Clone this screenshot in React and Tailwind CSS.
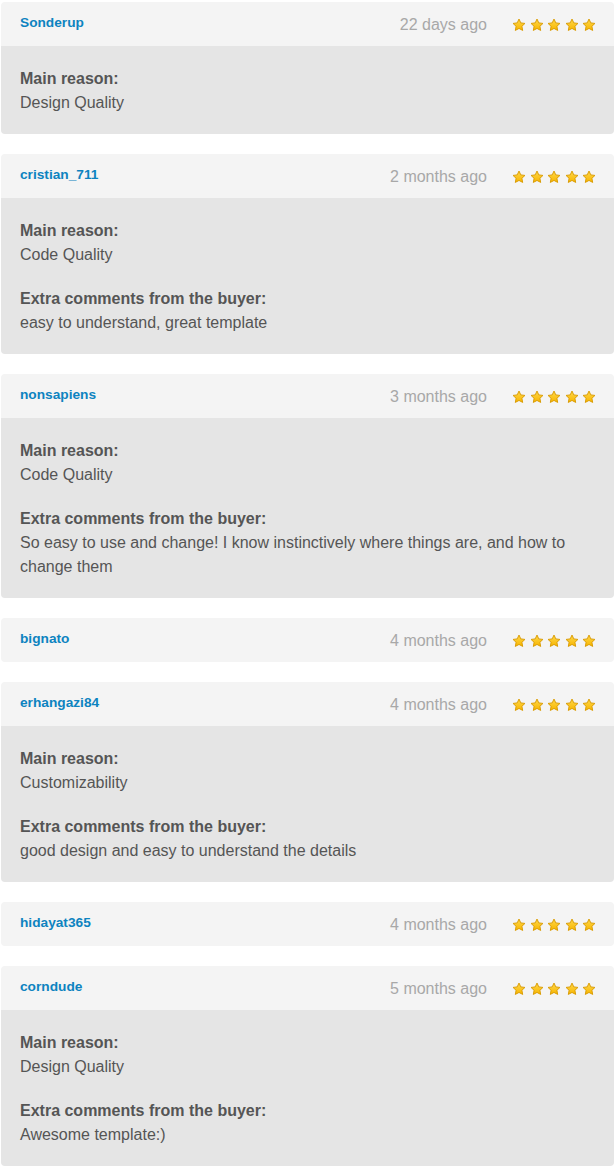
import React from "react";

const reviews = [
  { user: "Sonderup", date: "22 days ago", reason: "Design Quality" },
  {
    user: "cristian_711",
    date: "2 months ago",
    reason: "Code Quality",
    comment: "easy to understand, great template",
  },
  {
    user: "nonsapiens",
    date: "3 months ago",
    reason: "Code Quality",
    comment:
      "So easy to use and change! I know instinctively where things are, and how to change them",
  },
  { user: "bignato", date: "4 months ago" },
  {
    user: "erhangazi84",
    date: "4 months ago",
    reason: "Customizability",
    comment: "good design and easy to understand the details",
  },
  { user: "hidayat365", date: "4 months ago" },
  {
    user: "corndude",
    date: "5 months ago",
    reason: "Design Quality",
    comment: "Awesome template:)",
  },
];

function Star() {
  return (
    <svg width="14" height="14" viewBox="0 0 24 24">
      <defs>
        <linearGradient id="starFill" x1="0" y1="0" x2="0" y2="1">
          <stop offset="0" stopColor="#ffd84a" />
          <stop offset="1" stopColor="#f7b500" />
        </linearGradient>
      </defs>
      <path
        d="M12 1.8l3.1 6.6 7.1.9-5.2 4.9 1.3 7.1L12 17.9l-6.3 3.4 1.3-7.1-5.2-4.9 7.1-.9z"
        fill="url(#starFill)"
        stroke="#d89a00"
        strokeWidth="1.6"
        strokeLinejoin="round"
      />
    </svg>
  );
}

function Review({ user, date, reason, comment }) {
  const hasBody = reason || comment;
  return (
    <div className="mb-5 overflow-hidden rounded-[4px]">
      {/* Header */}
      <div className="flex h-11 items-center bg-[#f4f4f4] pl-[19px] pr-[18px]">
        <span className="mb-0.5 text-[13.7px] font-bold text-[#0d83c0]">{user}</span>
        <span className="ml-auto mt-[2px] text-[16px] text-[#a8a8a8]">{date}</span>
        <div className="ml-[25px] mt-px flex gap-[3.5px]">
          <Star />
          <Star />
          <Star />
          <Star />
          <Star />
        </div>
      </div>
      {/* Body */}
      {hasBody && (
        <div className="bg-[#e5e5e5] pb-[19px] pl-[19px] pr-[30px] pt-[21px] text-[16px] leading-6 text-[#555]">
          {reason && (
            <div>
              <div className="font-bold">Main reason:</div>
              <div>{reason}</div>
            </div>
          )}
          {comment && (
            <div className="mt-5">
              <div className="font-bold">Extra comments from the buyer:</div>
              <div>{comment}</div>
            </div>
          )}
        </div>
      )}
    </div>
  );
}

export default function App() {
  return (
    <div
      className="min-h-screen bg-white px-px pt-[2px]"
      style={{ fontFamily: '"Liberation Sans", Arial, sans-serif' }}
    >
      {reviews.map((r) => (
        <Review key={r.user} {...r} />
      ))}
    </div>
  );
}
